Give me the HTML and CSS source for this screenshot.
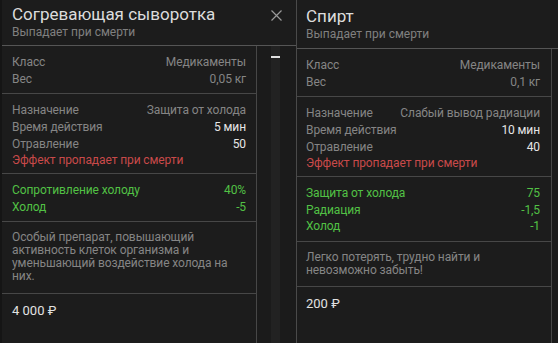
FILE: index.html
```html
<!DOCTYPE html>
<html lang="ru">
<head>
<meta charset="utf-8">
<link rel="stylesheet" href="styles.css">
</head>
<body>
<div class="desk">
  <div class="tip tip-left">
    <div class="head">
      <div class="head-text">
        <div class="title">Согревающая сыворотка</div>
        <div class="sub">Выпадает при смерти</div>
      </div>
      <svg class="close" width="11" height="11" viewBox="0 0 11 11"><path d="M0.5 0.5 L10.5 10.5 M10.5 0.5 L0.5 10.5" stroke="#9a9a9a" stroke-width="1.2" fill="none"/></svg>
    </div>
    <div class="body">
      <div class="content">
        <div class="sec">
          <div class="row"><span>Класс</span><span>Медикаменты</span></div>
          <div class="row"><span>Вес</span><span>0,05 кг</span></div>
        </div>
        <div class="sec sec-eff">
          <div class="row"><span>Назначение</span><span>Защита от холода</span></div>
          <div class="row"><span>Время действия</span><span class="hi">5 мин</span></div>
          <div class="row"><span>Отравление</span><span class="hi">50</span></div>
          <div class="row red"><span>Эффект пропадает при смерти</span></div>
        </div>
        <div class="sec green">
          <div class="row"><span>Сопротивление холоду</span><span>40%</span></div>
          <div class="row"><span>Холод</span><span>-5</span></div>
        </div>
        <div class="desc">Особый препарат, повышающий активность клеток организма и уменьшающий воздействие холода на них.</div>
        <div class="price">4 000 ₽</div>
      </div>
      <div class="scroll"><div class="track"><div class="thumb"></div></div></div>
    </div>
  </div>
  <div class="tip tip-right">
    <div class="head">
      <div class="head-text">
        <div class="title">Спирт</div>
        <div class="sub">Выпадает при смерти</div>
      </div>
    </div>
    <div class="body">
      <div class="content">
        <div class="sec">
          <div class="row"><span>Класс</span><span>Медикаменты</span></div>
          <div class="row"><span>Вес</span><span>0,1 кг</span></div>
        </div>
        <div class="sec sec-eff">
          <div class="row"><span>Назначение</span><span>Слабый вывод радиации</span></div>
          <div class="row"><span>Время действия</span><span class="hi">10 мин</span></div>
          <div class="row"><span>Отравление</span><span class="hi">40</span></div>
          <div class="row red"><span>Эффект пропадает при смерти</span></div>
        </div>
        <div class="sec green">
          <div class="row"><span>Защита от холода</span><span>75</span></div>
          <div class="row"><span>Радиация</span><span>-1,5</span></div>
          <div class="row"><span>Холод</span><span>-1</span></div>
        </div>
        <div class="desc">Легко потерять, трудно найти и невозможно забыть!</div>
        <div class="price">200 ₽</div>
      </div>
      <div class="scroll"></div>
    </div>
  </div>
</div>
</body>
</html>
```
FILE: styles.css
```css
* { box-sizing: border-box; }
html, body { margin: 0; padding: 0; }
body {
  background: #151515;
  width: 558px;
  height: 343px;
  overflow: hidden;
  font-family: Roboto, "Liberation Sans", sans-serif;
  color: #858585;
}
.desk {
  display: flex;
  padding-left: 2px;
  height: 343px;
  width: 558px;
}
.tip {
  background: #1c1c1c;
  display: flex;
  flex-direction: column;
  height: 343px;
  min-width: 0;
}
.tip-left { flex: 0 0 294px; }
.tip-right {
  flex: 1 1 auto;
  border-left: 1px solid #4a4a4a;
}
.head {
  display: flex;
  justify-content: space-between;
  align-items: flex-start;
  border-bottom: 1px solid #555;
}
.tip-left .head { height: 46px; padding: 4px 14px 0 10px; }
.tip-right .head { height: 49px; padding: 6px 9px 0 9px; }
.title {
  font-size: 17px;
  line-height: 20px;
  color: #dcdcdc;
}
.sub {
  font-size: 12px;
  line-height: 16px;
  color: #808080;
}
.close { margin-top: 6px; }
.body {
  flex: 1;
  display: flex;
}
.content {
  flex: 0 0 255px;
  border-right: 1px solid #474747;
  font-size: 12px;
  letter-spacing: -0.1px;
}
.sec {
  padding: 8px 10px 6px 10px;
  border-bottom: 1px solid #474747;
}
.tip-right .sec { padding: 8px 11px 6px 9px; }
.sec-eff { padding-bottom: 4px !important; }
.row {
  display: flex;
  justify-content: space-between;
  line-height: 16.67px;
  white-space: nowrap;
}
.hi { color: #e6e6e6; }
.red { color: #c94a4a; }
.green { color: #52c145; }
.desc {
  padding: 9px 14px 10px 10px;
  line-height: 13px;
  border-bottom: 1px solid #474747;
}
.tip-right .desc { padding: 9px 14px 9px 9px; }
.price {
  padding: 8px 10px;
  font-size: 13px;
  letter-spacing: 0;
  line-height: 17px;
  color: #e2e2e2;
}
.tip-right .price { padding: 8px 9px; }
.scroll {
  flex: 1 1 auto;
  min-width: 0;
  display: flex;
  padding-left: 14px;
  background: #1b1b1b;
}
.track {
  width: 9px;
  background: #222;
  padding-top: 10px;
}
.thumb {
  height: 2px;
  background: #e0e0e0;
}
```
